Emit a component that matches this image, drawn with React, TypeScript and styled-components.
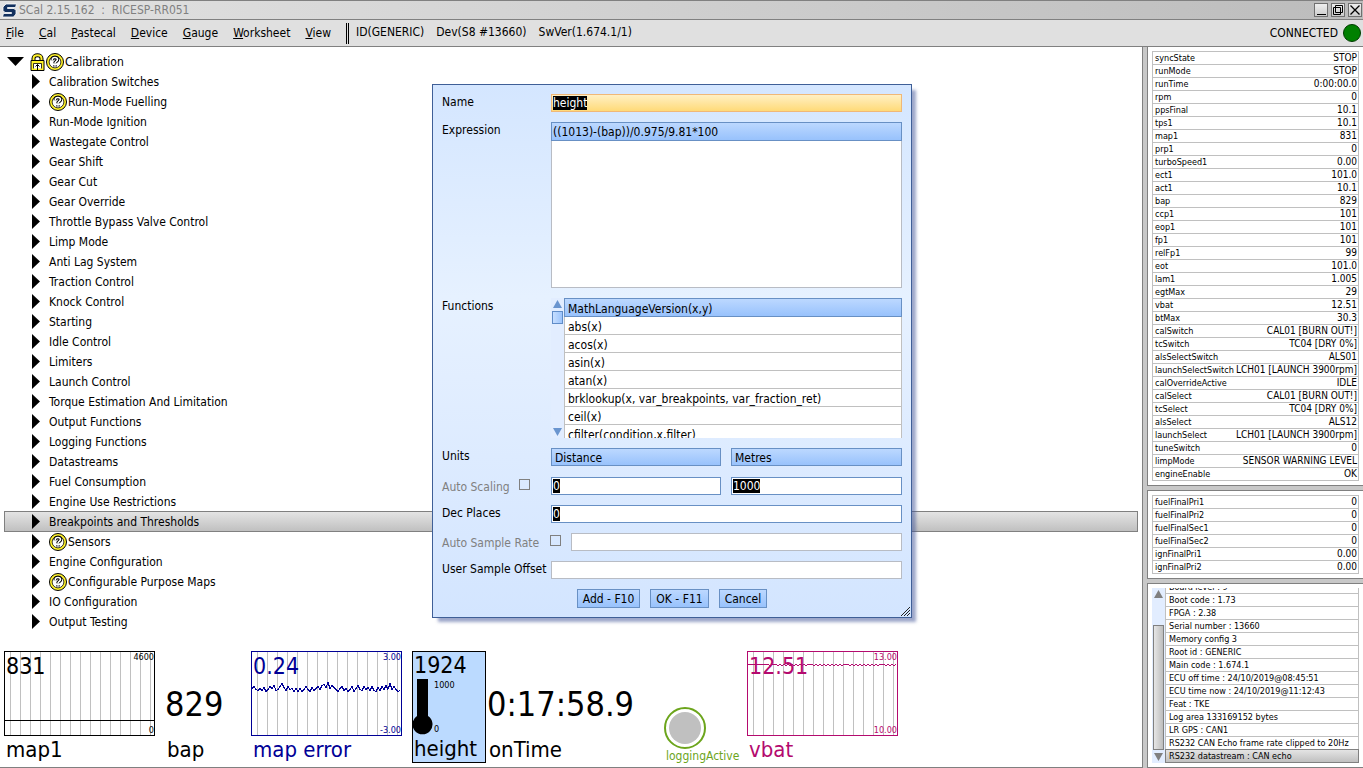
import React from "react";
import styled, { createGlobalStyle, css } from "styled-components";

const GlobalStyle = createGlobalStyle`
  * { box-sizing: border-box; }
  body { margin: 0; background: #c8c8c8; overflow: hidden; }
  body, button, input, select {
    font-family: "DejaVu Sans Condensed", "DejaVu Sans", sans-serif;
    font-size: 12px;
    color: #000;
  }
  ul { list-style: none; margin: 0; padding: 0; }
`;

/* ---------- window frame ---------- */

const Window = styled.div`
  display: flex;
  flex-direction: column;
  height: 100vh;
`;

const TitleBar = styled.header`
  display: flex;
  align-items: center;
  height: 20px;
  padding: 0 1px 0 2px;
  border-top: 1px solid #808080;
  border-bottom: 1px solid #808080;
  background: linear-gradient(90deg, #e2e2e2, #bcbcbc);
`;

const Title = styled.h1`
  flex: 1;
  margin: 0 0 0 2px;
  font-size: 12px;
  font-weight: normal;
  color: #808080;
  white-space: pre;
`;

const WindowButtons = styled.div`
  display: flex;
  gap: 3px;
`;

const WindowButton = styled.button`
  display: flex;
  width: 14px;
  height: 14px;
  padding: 0;
  border: 1px solid #707070;
  background: linear-gradient(#eee, #ccc);
`;

const MenuBar = styled.nav`
  display: flex;
  align-items: center;
  height: 27px;
  padding: 0 2px 0 6px;
  border-bottom: 1px solid #808080;
  background: #e0e0e0;
`;

const Menus = styled.div`
  display: flex;
  gap: 15px;
`;

const MenuButton = styled.button`
  padding: 0;
  border: 0;
  background: none;
  line-height: 16px;
`;

const DeviceInfo = styled.div`
  display: flex;
  gap: 12px;
  flex: 1;
  height: 21px;
  margin-left: 15px;
  padding-left: 7px;
  border-left: 3px double #000;
  line-height: 18px;
`;

const Connection = styled.div`
  display: flex;
  align-items: center;
  gap: 5px;
  line-height: 18px;
`;

const Lamp = styled.span`
  width: 18px;
  height: 18px;
  border: 1px solid #003c00;
  border-radius: 50%;
  background: #008000;
`;

const Main = styled.main`
  display: flex;
  flex: 1;
  gap: 4px;
  min-height: 0;
`;

/* ---------- calibration tree ---------- */

const Worksheet = styled.section`
  display: flex;
  flex-direction: column;
  justify-content: space-between;
  flex: 1;
  min-width: 0;
  padding: 4px;
  border: solid #808080;
  border-width: 0 1px 1px 0;
  background: #fff;
`;

const TreeRow = styled.button<{ $root?: boolean; $selected?: boolean }>`
  display: flex;
  align-items: center;
  gap: ${(p) => (p.$root ? 6 : 9)}px;
  width: 100%;
  height: 20px;
  padding: 1px 0 0 ${(p) => (p.$root ? 2 : 27)}px;
  border: 1px solid transparent;
  background: none;
  text-align: left;
  ${(p) =>
    p.$selected &&
    css`
      height: 21px;
      margin-bottom: -1px;
      padding-top: 0;
      border-color: #808080;
      background: linear-gradient(#e4e4e4, #c0c0c0);
    `}
`;

const TreeItem = styled.li`
  display: flow-root;
`;

const TreeLabel = styled.span`
  display: flex;
  align-items: center;
  gap: 1px;
`;

/* ---------- gauges ---------- */

const Gauges = styled.div`
  display: grid;
  grid-template-columns: 161px 86px 161px 75px 177px 83px 151px;
  height: 112px;
`;

const Gauge = styled.figure<{ $color?: string }>`
  display: flex;
  flex-direction: column;
  justify-content: flex-end;
  margin: 0;
  color: ${(p) => p.$color || "#000"};
`;

const GaugeLabel = styled.figcaption`
  padding-left: 2px;
  font-size: 22px;
  line-height: 27px;
  white-space: nowrap;
`;

const BigValue = styled.output`
  font-size: 34px;
  line-height: 40px;
  margin-bottom: 12px;
  white-space: nowrap;
`;

const ChartBox = styled.div`
  position: relative;
  width: 151px;
  height: 85px;
  border: 1px solid currentColor;
`;

const ChartSvg = styled.svg`
  display: block;
`;

const ChartValue = styled.output`
  position: absolute;
  left: 1px;
  top: 1px;
  font-size: 23px;
  line-height: 27px;
`;

const ChartLimit = styled.span<{ $low?: boolean }>`
  position: absolute;
  right: 0;
  ${(p) => (p.$low ? "bottom: 0;" : "top: 0;")}
  font-size: 9px;
  line-height: 10px;
`;

const HeightGauge = styled(Gauge)`
  justify-content: space-between;
  width: 74px;
  border: 1px solid #000;
  background: #bbdaff;
`;

const HeightValue = styled.output`
  padding-left: 1px;
  font-size: 23px;
  line-height: 27px;
`;

const Thermometer = styled.div`
  display: flex;
`;

const Scale = styled.div`
  display: flex;
  flex-direction: column;
  justify-content: space-between;
  font-size: 9px;
  line-height: 12px;
`;

const HeightLabel = styled(GaugeLabel)`
  padding-left: 1px;
`;

const LedLabel = styled(GaugeLabel)`
  font-size: 12px;
  line-height: 14px;
`;

/* ---------- side panels ---------- */

const Side = styled.aside`
  display: flex;
  flex-direction: column;
  gap: 4px;
  flex: 0 0 216px;
  min-width: 0;
`;

const Panel = styled.section<{ $fill?: boolean }>`
  padding: 4px;
  border: 1px solid #808080;
  border-right: 0;
  background: #fff;
  &:first-child { border-top: 0; }
  ${(p) =>
    p.$fill &&
    css`
      display: flex;
      flex: 1;
      min-height: 0;
    `}
`;

const ValueTable = styled.table`
  width: 100%;
  border: 1px solid #c0c0c0;
  border-bottom: 0;
  border-spacing: 0;
  line-height: 12px;
  white-space: nowrap;
  th, td {
    height: 13px;
    padding: 0 0 0 2px;
    border-bottom: 1px solid #c0c0c0;
    text-align: left;
    font-size: 9px;
    font-weight: normal;
  }
  td {
    padding: 0 1px 0 0;
    font-size: 10px;
    text-align: right;
  }
`;

const LogList = styled.ul`
  display: flex;
  flex-direction: column;
  justify-content: flex-end;
  flex: 1;
  min-width: 0;
  overflow: hidden;
`;

const LogRow = styled.li<{ $selected?: boolean }>`
  flex: none;
  padding: 0 3px;
  border: 1px solid #c0c0c0;
  border-top: 0;
  font-size: 9px;
  line-height: 12px;
  white-space: nowrap;
  ${(p) =>
    p.$selected &&
    css`
      margin-top: -1px;
      border: 1px solid #808080;
      background: linear-gradient(#e4e4e4, #c0c0c0);
    `}
`;

const ScrollTrack = styled.div<{ $blue?: boolean }>`
  display: flex;
  flex-direction: column;
  align-items: center;
  align-self: stretch;
  flex: 0 0 13px;
  padding: 2px 0;
  background: #e2edff;
  color: ${(p) => (p.$blue ? "#6a95cf" : "#808080")};
`;

const ArrowButton = styled.button`
  display: flex;
  padding: 0;
  border: 0;
  background: none;
  color: inherit;
`;

const SideThumb = styled.div`
  flex: 1;
  width: 11px;
  margin: 27px 0 3px;
  border: 1px solid #808080;
  background: linear-gradient(90deg, #e6e6e6, #bdbdbd);
`;

const FunctionThumb = styled.div`
  width: 11px;
  height: 13px;
  margin: 3px 0 auto;
  border: 1px solid #5f8cc8;
  background: linear-gradient(90deg, #c6deff, #9cc4fc);
`;

/* ---------- channel dialog ---------- */

const Dialog = styled.form`
  position: absolute;
  left: 432px;
  top: 84px;
  width: 480px;
  display: flex;
  flex-direction: column;
  gap: 10px;
  padding: 9px;
  border: 1px solid #3f5f97;
  background: linear-gradient(#d4e6ff, #e6f1ff 40%, #e2eeff 55%, #d3e5ff);
  box-shadow: 5px 5px 3px -1px rgba(60, 80, 150, 0.5);
`;

const FormRow = styled.div<{ $height?: number }>`
  display: flex;
  align-items: flex-start;
  height: ${(p) => p.$height || 18}px;
`;

const Label = styled.label<{ $disabled?: boolean; $auto?: boolean }>`
  flex: ${(p) => (p.$auto ? "none" : "0 0 109px")};
  line-height: ${(p) => (p.$auto ? 20 : 16)}px;
  color: ${(p) => (p.$disabled ? "#808080" : "#000")};
  white-space: nowrap;
`;

const CheckLabel = styled.div<{ $width: number; $inset: number }>`
  display: flex;
  justify-content: space-between;
  flex: 0 0 ${(p) => p.$width}px;
  padding-right: ${(p) => p.$inset}px;
`;

const Tick = styled.input`
  appearance: none;
  width: 11px;
  height: 11px;
  margin: 2px 0 0;
  border: 1px solid #808080;
`;

const Fields = styled.div`
  display: grid;
  grid-template-columns: 170px 1fr;
  gap: 10px;
  flex: 1;
`;

type Tone = "active" | "normal" | "disabled";

const FieldBox = styled.div<{ $tone: Tone }>`
  display: flex;
  align-items: center;
  flex: 1;
  height: 18px;
  padding: 0 1px;
  border: 1px solid
    ${(p) => ({ active: "#f0b878", normal: "#6890c4", disabled: "#b8bcc4" })[p.$tone]};
  background: ${(p) => (p.$tone === "active" ? "linear-gradient(#fff0c4, #ffda78)" : "#fff")};
`;

const TextInput = styled.input<{ $marked?: boolean }>`
  height: 14px;
  padding: 0;
  border: 0;
  outline: 0;
  background: none;
  line-height: 14px;
  ${(p) =>
    p.$marked
      ? css`
          field-sizing: content;
          background: #000;
          color: #fff;
        `
      : css`
          flex: 1;
          min-width: 0;
        `}
`;

const blueBar = css`
  border: 1px solid #6890c4;
  background: linear-gradient(#bcd8ff, #98c2fc);
`;

const UnitSelect = styled.select`
  ${blueBar}
  appearance: none;
  width: 100%;
  height: 18px;
  padding: 1px 3px 0;
  border-radius: 0;
`;

const ExpressionList = styled.ul`
  flex: 1;
  height: 166px;
  border: 1px solid #b8bcc4;
  background: #fff;
`;

const ExpressionRow = styled.li`
  ${blueBar}
  height: 19px;
  margin: -1px;
  padding: 0 1px;
  line-height: 18px;
`;

const FunctionList = styled.ul`
  flex: 1;
  height: 140px;
  overflow: hidden;
`;

const FunctionRow = styled.li<{ $selected?: boolean }>`
  height: 18px;
  padding: 1px 3px 0;
  border: 1px solid #c0c0c0;
  border-top: 0;
  background: #fff;
  line-height: 18px;
  ${(p) =>
    p.$selected &&
    css`
      ${blueBar}
      height: 19px;
    `}
`;

const Actions = styled.div`
  display: flex;
  justify-content: center;
  gap: 10px;
`;

const ActionButton = styled.button`
  ${blueBar}
  height: 19px;
  padding: 0 5px;
`;

const Grip = styled.svg`
  position: absolute;
  right: 1px;
  bottom: 1px;
`;

/* ---------- drawings ---------- */

const Logo = () => (
  <svg width="15" height="15" viewBox="0 0 15 15">
    <path
      d="M4 1H14.500L13.500 4.500H5.500V5.500H12L14 7.500V11L11.500 14H.5L1.500 10.500H9.500V9.500H3L1 7.500V4Z"
      fill="#12305e"
      stroke="#fff"
      strokeWidth=".8"
    />
  </svg>
);

const QUESTION = "M6.300 7.300V6.500C6.300 3.800 11.500 3.800 11.500 6.500C11.500 8.400 9 8.300 9 10.200M9 12.200V13.400";

const Help = () => (
  <svg width="18" height="18" viewBox="0 0 18 18">
    <circle cx="9" cy="9" r="8.500" fill="#fff22a" stroke="#000" strokeWidth="1" />
    <circle cx="9" cy="9" r="5.900" fill="#fff" stroke="#000" strokeWidth=".8" />
    <path d={QUESTION} fill="none" stroke="#000" strokeWidth="3.600" />
    <path d={QUESTION} fill="none" stroke="#fff" strokeWidth="1.600" />
  </svg>
);

const SHACKLE = "M3.500 9V5.500C3.500 1.300 11.500 1.300 11.500 5.500V9";

const Lock = () => (
  <svg width="15" height="18" viewBox="0 0 15 18">
    <path d={SHACKLE} fill="#fff" stroke="#000" strokeWidth="4" />
    <path d={SHACKLE} fill="none" stroke="#fff22a" strokeWidth="2" />
    <path d="M1 7.500H14V17.500H1Z" fill="#fff22a" stroke="#000" />
    <path d="M3.500 15.500V10.500H11.500V15.500" fill="#fff" stroke="#000" strokeWidth=".8" />
    <path d="M7.500 17V11.500M5.500 13.500L7.500 11.500L9.500 13.500" fill="none" stroke="#000" />
  </svg>
);

const Arrow = ({ dir, w, h }: { dir: "up" | "down" | "right"; w: number; h: number }) => {
  const points = {
    up: `0,${h} ${w},${h} ${w / 2},0`,
    down: `0,0 ${w},0 ${w / 2},${h}`,
    right: `0,0 ${w},${h / 2} 0,${h}`,
  }[dir];
  return (
    <svg width={w} height={h}>
      <polygon points={points} fill="currentColor" />
    </svg>
  );
};

const gridXs = Array.from({ length: 15 }, (_, i) => 5.5 + i * 10);

const ERROR_LEVELS = [
  0, -2, 1, 2, 0, 2, -1, 3, 1, -2, 0, -3, 2, 1, -2, -5, -1, 2, -2, 1, 0, 3, 0, 3, 0, 3, 1, -2, 1, 3, -1, 2, 0, -2,
  1, -3, -4, -1, -6, 0, -3, -1, 1, 3, 0, -2, 2, 0, 3, 1, -2, 3, 0, -3, 1, 2, -2, 1, -1, 2, -2, 2, 3, -1, 2, -2, 1,
  -3, 1, -5, 1, -2, 1, 3, 2,
];

const trace = (levels: number[], mid: number) =>
  levels.map((v, i) => `${i * 2},${mid + v}`).join(" ");

const MAP_TRACE = "0,68.5 149,68.5";
const ERROR_TRACE = trace(ERROR_LEVELS, 36.5);
const VBAT_TRACE = trace(
  Array.from({ length: 75 }, (_, i) => (i < 11 || i % 9 === 4 ? 0 : i % 2)),
  12.5
);

type ChartProps = {
  name: string;
  value: string;
  high: string;
  low: string;
  points: string;
  color?: string;
};

const ChartGauge = ({ name, value, high, low, points, color }: ChartProps) => (
  <Gauge $color={color}>
    <ChartBox>
      <ChartSvg width="149" height="83" shapeRendering="crispEdges">
        {gridXs.map((x) => (
          <line key={x} x1={x} x2={x} y1="0" y2="83" stroke="#c0c0c0" />
        ))}
        <polyline points={points} fill="none" stroke="currentColor" />
      </ChartSvg>
      <ChartValue>{value}</ChartValue>
      <ChartLimit>{high}</ChartLimit>
      <ChartLimit $low>{low}</ChartLimit>
    </ChartBox>
    <GaugeLabel>{name}</GaugeLabel>
  </Gauge>
);

/* ---------- data ---------- */

const menus = ["File", "Cal", "Pastecal", "Device", "Gauge", "Worksheet", "View"];

const tree = [
  "Calibration Switches", "Run-Mode Fuelling", "Run-Mode Ignition", "Wastegate Control", "Gear Shift",
  "Gear Cut", "Gear Override", "Throttle Bypass Valve Control", "Limp Mode", "Anti Lag System",
  "Traction Control", "Knock Control", "Starting", "Idle Control", "Limiters", "Launch Control",
  "Torque Estimation And Limitation", "Output Functions", "Logging Functions", "Datastreams",
  "Fuel Consumption", "Engine Use Restrictions", "Breakpoints and Thresholds", "Sensors",
  "Engine Configuration", "Configurable Purpose Maps", "IO Configuration", "Output Testing",
];
const withHelp = ["Run-Mode Fuelling", "Sensors", "Configurable Purpose Maps"];

const status: [string, string][] = [
  ["syncState", "STOP"], ["runMode", "STOP"], ["runTime", "0:00:00.0"], ["rpm", "0"], ["ppsFinal", "10.1"],
  ["tps1", "10.1"], ["map1", "831"], ["prp1", "0"], ["turboSpeed1", "0.00"], ["ect1", "101.0"],
  ["act1", "10.1"], ["bap", "829"], ["ccp1", "101"], ["eop1", "101"], ["fp1", "101"], ["relFp1", "99"],
  ["eot", "101.0"], ["lam1", "1.005"], ["egtMax", "29"], ["vbat", "12.51"], ["btMax", "30.3"],
  ["calSwitch", "CAL01 [BURN OUT!]"], ["tcSwitch", "TC04 [DRY 0%]"], ["alsSelectSwitch", "ALS01"],
  ["launchSelectSwitch", "LCH01 [LAUNCH 3900rpm]"], ["calOverrideActive", "IDLE"],
  ["calSelect", "CAL01 [BURN OUT!]"], ["tcSelect", "TC04 [DRY 0%]"], ["alsSelect", "ALS12"],
  ["launchSelect", "LCH01 [LAUNCH 3900rpm]"], ["tuneSwitch", "0"], ["limpMode", "SENSOR WARNING LEVEL"],
  ["engineEnable", "OK"],
];

const finals: [string, string][] = [
  ["fuelFinalPri1", "0"], ["fuelFinalPri2", "0"], ["fuelFinalSec1", "0"], ["fuelFinalSec2", "0"],
  ["ignFinalPri1", "0.00"], ["ignFinalPri2", "0.00"],
];

const log = [
  "Board level : 9", "Boot code : 1.73", "FPGA : 2.38", "Serial number : 13660", "Memory config 3",
  "Root id : GENERIC", "Main code : 1.674.1", "ECU off time : 24/10/2019@08:45:51",
  "ECU time now : 24/10/2019@11:12:43", "Feat : TKE", "Log area 133169152 bytes", "LR GPS : CAN1",
  "RS232 CAN Echo frame rate clipped to 20Hz", "RS232 datastream : CAN echo",
];

const functions = [
  "MathLanguageVersion(x,y)", "abs(x)", "acos(x)", "asin(x)", "atan(x)",
  "brklookup(x, var_breakpoints, var_fraction_ret)", "ceil(x)", "cfilter(condition,x,filter)",
];

const Values = ({ rows }: { rows: [string, string][] }) => (
  <ValueTable>
    <tbody>
      {rows.map(([name, value]) => (
        <tr key={name}>
          <th scope="row">{name}</th>
          <td>{value}</td>
        </tr>
      ))}
    </tbody>
  </ValueTable>
);

const ChannelDialog = () => (
  <Dialog role="dialog" aria-label="Channel" onSubmit={(e) => e.preventDefault()}>
    <FormRow>
      <Label htmlFor="name">Name</Label>
      <FieldBox $tone="active">
        <TextInput id="name" $marked defaultValue="height" />
      </FieldBox>
    </FormRow>
    <FormRow $height={166}>
      <Label as="span" id="expression">Expression</Label>
      <ExpressionList aria-labelledby="expression">
        <ExpressionRow>((1013)-(bap))/0.975/9.81*100</ExpressionRow>
      </ExpressionList>
    </FormRow>
    <FormRow $height={140}>
      <Label as="span" id="functions">Functions</Label>
      <ScrollTrack $blue>
        <ArrowButton type="button" aria-label="Scroll up"><Arrow dir="up" w={9} h={8} /></ArrowButton>
        <FunctionThumb />
        <ArrowButton type="button" aria-label="Scroll down"><Arrow dir="down" w={9} h={8} /></ArrowButton>
      </ScrollTrack>
      <FunctionList aria-labelledby="functions">
        {functions.map((f, i) => (
          <FunctionRow key={f} $selected={i === 0}>{f}</FunctionRow>
        ))}
      </FunctionList>
    </FormRow>
    <FormRow $height={19}>
      <Label htmlFor="quantity">Units</Label>
      <Fields>
        <UnitSelect id="quantity"><option>Distance</option></UnitSelect>
        <UnitSelect aria-label="Unit"><option>Metres</option></UnitSelect>
      </Fields>
    </FormRow>
    <FormRow>
      <CheckLabel $width={109} $inset={21}>
        <Label $auto $disabled htmlFor="autoScaling">Auto Scaling</Label>
        <Tick type="checkbox" id="autoScaling" />
      </CheckLabel>
      <Fields>
        <FieldBox $tone="normal"><TextInput aria-label="Minimum" $marked defaultValue="0" /></FieldBox>
        <FieldBox $tone="normal"><TextInput aria-label="Maximum" $marked defaultValue="1000" /></FieldBox>
      </Fields>
    </FormRow>
    <FormRow>
      <Label htmlFor="places">Dec Places</Label>
      <FieldBox $tone="normal"><TextInput id="places" $marked defaultValue="0" /></FieldBox>
    </FormRow>
    <FormRow>
      <CheckLabel $width={129} $inset={10}>
        <Label $auto $disabled htmlFor="autoRate">Auto Sample Rate</Label>
        <Tick type="checkbox" id="autoRate" />
      </CheckLabel>
      <FieldBox $tone="disabled"><TextInput aria-label="Sample rate" disabled /></FieldBox>
    </FormRow>
    <FormRow>
      <Label htmlFor="offset">User Sample Offset</Label>
      <FieldBox $tone="disabled"><TextInput id="offset" /></FieldBox>
    </FormRow>
    <Actions>
      <ActionButton type="button">Add - F10</ActionButton>
      <ActionButton type="submit">OK - F11</ActionButton>
      <ActionButton type="button">Cancel</ActionButton>
    </Actions>
    <Grip width="9" height="9">
      <path d="M0 9L9 0M3 9L9 3M6 9L9 6" stroke="#202020" />
    </Grip>
  </Dialog>
);

export default function App() {
  return (
    <Window>
      <GlobalStyle />
      <TitleBar>
        <Logo />
        <Title>{"SCal 2.15.162  :  RICESP-RR051"}</Title>
        <WindowButtons>
          <WindowButton aria-label="Minimise">
            <svg width="12" height="12"><path d="M2 10.500H11" stroke="#000" /></svg>
          </WindowButton>
          <WindowButton aria-label="Restore">
            <svg width="12" height="12"><path d="M1.500 3.500H8.500V10.500H1.500ZM3.500 3V1.500H10.500V8.500H9M3.500 3.500V8.500H8.500" fill="none" stroke="#000" /></svg>
          </WindowButton>
          <WindowButton aria-label="Close">
            <svg width="12" height="12"><path d="M1.500 1.500L10.500 10.500M10.500 1.500L1.500 10.500" stroke="#000" strokeWidth="1.300" /></svg>
          </WindowButton>
        </WindowButtons>
      </TitleBar>
      <MenuBar>
        <Menus>
          {menus.map((m) => <MenuButton key={m}><u>{m[0]}</u>{m.slice(1)}</MenuButton>)}
        </Menus>
        <DeviceInfo>
          <span>ID(GENERIC)</span>
          <span>Dev(S8 #13660)</span>
          <span>SwVer(1.674.1/1)</span>
        </DeviceInfo>
        <Connection>CONNECTED<Lamp /></Connection>
      </MenuBar>
      <Main>
        <Worksheet>
          <ul>
            <TreeItem>
              <TreeRow $root aria-expanded="true">
                <Arrow dir="down" w={17} h={9} />
                <TreeLabel><Lock /><Help />Calibration</TreeLabel>
              </TreeRow>
              <ul>
                {tree.map((t) => (
                  <li key={t}>
                    <TreeRow $selected={t === "Breakpoints and Thresholds"}>
                      <Arrow dir="right" w={8} h={15} />
                      <TreeLabel>{withHelp.includes(t) && <Help />}{t}</TreeLabel>
                    </TreeRow>
                  </li>
                ))}
              </ul>
            </TreeItem>
          </ul>
          <Gauges>
            <ChartGauge name="map1" value="831" high="4600" low="0" points={MAP_TRACE} />
            <Gauge>
              <BigValue>829</BigValue>
              <GaugeLabel>bap</GaugeLabel>
            </Gauge>
            <ChartGauge name="map error" value="0.24" high="3.00" low="-3.00" points={ERROR_TRACE} color="#000096" />
            <HeightGauge>
              <HeightValue>1924</HeightValue>
              <Thermometer>
                <svg width="21" height="56">
                  <path d="M4 0H15V37A10 10 0 1 1 4 37Z" />
                </svg>
                <Scale><span>1000</span><span>0</span></Scale>
              </Thermometer>
              <HeightLabel>height</HeightLabel>
            </HeightGauge>
            <Gauge>
              <BigValue>0:17:58.9</BigValue>
              <GaugeLabel>onTime</GaugeLabel>
            </Gauge>
            <Gauge $color="#6ca51c">
              <svg width="42" height="42">
                <circle cx="21" cy="21" r="20" fill="#fff" stroke="currentColor" strokeWidth="2" />
                <circle cx="21" cy="21" r="16" fill="#c0c0c0" />
              </svg>
              <LedLabel>loggingActive</LedLabel>
            </Gauge>
            <ChartGauge name="vbat" value="12.51" high="13.00" low="10.00" points={VBAT_TRACE} color="#b40a6e" />
          </Gauges>
        </Worksheet>
        <Side>
          <Panel><Values rows={status} /></Panel>
          <Panel><Values rows={finals} /></Panel>
          <Panel $fill>
            <ScrollTrack>
              <ArrowButton aria-label="Scroll up"><Arrow dir="up" w={9} h={8} /></ArrowButton>
              <SideThumb />
              <ArrowButton aria-label="Scroll down"><Arrow dir="down" w={9} h={8} /></ArrowButton>
            </ScrollTrack>
            <LogList>
              {log.map((l, i) => <LogRow key={l} $selected={i === log.length - 1}>{l}</LogRow>)}
            </LogList>
          </Panel>
        </Side>
      </Main>
      <ChannelDialog />
    </Window>
  );
}
